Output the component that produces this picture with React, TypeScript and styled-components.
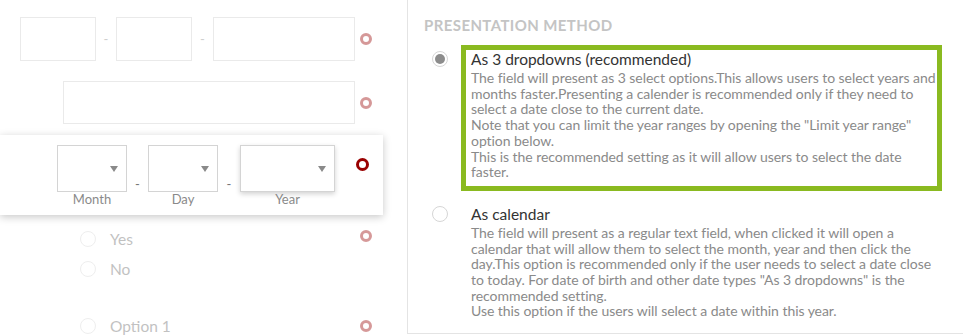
import React from "react";
import styled, { createGlobalStyle } from "styled-components";

const GlobalStyle = createGlobalStyle`
  html, body {
    margin: 0;
    padding: 0;
    background: #ffffff;
    font-family: Lato, "Open Sans", sans-serif;
  }
`;

const Page = styled.div`
  display: flex;
  width: 963px;
  height: 336px;
  overflow: hidden;
  background: #fff;
`;

const LeftPane = styled.div`
  width: 407px;
  flex-shrink: 0;
  display: flex;
  flex-direction: column;
  padding-top: 17px;
  box-sizing: border-box;
`;

const Faded = styled.div<{ $top?: number }>`
  opacity: 0.4;
  margin-top: ${(p) => p.$top ?? 0}px;
`;

const FieldRow = styled.div<{ $indent: number }>`
  display: flex;
  align-items: center;
  padding-left: ${(p) => p.$indent}px;
`;

const TextBox = styled.div<{ $w: number }>`
  width: ${(p) => p.$w}px;
  height: 44px;
  box-sizing: border-box;
  border: 1px solid #cccccc;
  background: #fff;
`;

const Dash = styled.span<{ $w: number }>`
  width: ${(p) => p.$w}px;
  text-align: center;
  color: #888;
  font-size: 13px;
`;

const Required = styled.span<{ $size?: number }>`
  display: inline-block;
  width: ${(p) => p.$size ?? 12}px;
  height: ${(p) => p.$size ?? 12}px;
  box-sizing: border-box;
  border: 3px solid #990000;
  border-radius: 50%;
  flex-shrink: 0;
`;

const Card = styled.div`
  margin-top: 11px;
  width: 383px;
  height: 82px;
  box-sizing: border-box;
  background: #fff;
  box-shadow: 0 2px 8px rgba(0, 0, 0, 0.22);
  display: flex;
  align-items: flex-start;
  padding: 10px 0 0 57px;
`;

const SelectGroup = styled.div`
  display: flex;
  flex-direction: column;
  align-items: center;
`;

const SelectBox = styled.div<{ $w: number; $focus?: boolean }>`
  width: ${(p) => p.$w}px;
  height: 47px;
  box-sizing: border-box;
  border: 1px solid #d4d4d4;
  background: #fff;
  display: flex;
  align-items: center;
  justify-content: flex-end;
  padding-right: 8px;
  box-shadow: ${(p) => (p.$focus ? "0 2px 5px rgba(0,0,0,0.18)" : "none")};
`;

const Caret = styled.span`
  width: 0;
  height: 0;
  border-left: 4px solid transparent;
  border-right: 4px solid transparent;
  border-top: 6px solid #8a8a8a;
`;

const SelectLabel = styled.span`
  font-size: 13px;
  color: #8a8a8a;
  line-height: 15px;
`;

const SelectDash = styled.span<{ $w: number }>`
  width: ${(p) => p.$w}px;
  text-align: center;
  color: #777;
  font-size: 13px;
  margin-top: 31px;
`;

const ChoiceRow = styled.div<{ $top: number }>`
  display: flex;
  align-items: center;
  margin-top: ${(p) => p.$top}px;
  padding-left: 80px;
  height: 20px;
`;

const Radio = styled.span<{ $checked?: boolean }>`
  width: 16px;
  height: 16px;
  box-sizing: border-box;
  border-radius: 50%;
  border: 1px solid #d6d6d6;
  background: #fff;
  flex-shrink: 0;
  display: flex;
  align-items: center;
  justify-content: center;
  &::after {
    content: "";
    display: ${(p) => (p.$checked ? "block" : "none")};
    width: 10px;
    height: 10px;
    border-radius: 50%;
    background: #8c8c8c;
  }
`;

const ChoiceText = styled.span`
  margin-left: 14px;
  font-size: 15.5px;
  color: #666;
  width: 240px;
`;

const RightPane = styled.div`
  flex: 1;
  height: 334px;
  box-sizing: border-box;
  border-left: 1px solid #e4e4e4;
  border-bottom: 1px solid #e4e4e4;
  padding: 16px 0 0 16px;
`;

const SectionTitle = styled.div`
  font-size: 15px;
  font-weight: 700;
  color: #c4c4c4;
  line-height: 18px;
  letter-spacing: 0.4px;
`;

const Options = styled.div`
  display: flex;
  flex-direction: column;
  gap: 9px;
  margin-top: 11px;
`;

const Option = styled.div`
  display: flex;
  align-items: flex-start;
  padding-left: 8px;
`;

const RadioSlot = styled.div`
  padding-top: 6px;
  width: 29px;
  flex-shrink: 0;
`;

const OptionBody = styled.div<{ $active?: boolean }>`
  width: 481px;
  box-sizing: border-box;
  border: 5px solid ${(p) => (p.$active ? "#8aba20" : "transparent")};
  padding: 0 0 6px 5px;
`;

const OptionTitle = styled.div`
  font-size: 15.5px;
  color: #333;
  line-height: 18px;
  margin-bottom: 2px;
`;

const OptionDesc = styled.div`
  font-size: 14px;
  color: #8a8a8a;
  line-height: 15.7px;
  letter-spacing: -0.05px;
  margin-right: -4px;
`;

export default function App() {
  return (
    <>
      <GlobalStyle />
      <Page>
        <LeftPane>
          <Faded>
            <FieldRow $indent={20}>
              <TextBox $w={76} />
              <Dash $w={20}>-</Dash>
              <TextBox $w={76} />
              <Dash $w={21}>-</Dash>
              <TextBox $w={142} />
              <Required style={{ marginLeft: 5 }} />
            </FieldRow>
          </Faded>
          <Faded $top={20}>
            <FieldRow $indent={63}>
              <TextBox $w={292} style={{ height: 43 }} />
              <Required style={{ marginLeft: 5 }} />
            </FieldRow>
          </Faded>

          <Card>
            <SelectGroup>
              <SelectBox $w={70}>
                <Caret />
              </SelectBox>
              <SelectLabel>Month</SelectLabel>
            </SelectGroup>
            <SelectDash $w={21}>-</SelectDash>
            <SelectGroup>
              <SelectBox $w={70}>
                <Caret />
              </SelectBox>
              <SelectLabel>Day</SelectLabel>
            </SelectGroup>
            <SelectDash $w={22}>-</SelectDash>
            <SelectGroup>
              <SelectBox $w={95} $focus>
                <Caret />
              </SelectBox>
              <SelectLabel>Year</SelectLabel>
            </SelectGroup>
            <Required $size={13} style={{ marginLeft: 21, marginTop: 13 }} />
          </Card>

          <Faded>
            <ChoiceRow $top={14}>
              <Radio />
              <ChoiceText>Yes</ChoiceText>
              <Required style={{ marginLeft: 10, marginTop: -6 }} />
            </ChoiceRow>
            <ChoiceRow $top={10}>
              <Radio />
              <ChoiceText>No</ChoiceText>
            </ChoiceRow>
            <ChoiceRow $top={37}>
              <Radio />
              <ChoiceText>Option 1</ChoiceText>
              <Required style={{ marginLeft: 10, marginTop: 0 }} />
            </ChoiceRow>
          </Faded>
        </LeftPane>

        <RightPane>
          <SectionTitle>PRESENTATION METHOD</SectionTitle>
          <Options>
            <Option>
              <RadioSlot>
                <Radio $checked />
              </RadioSlot>
              <OptionBody $active>
                <OptionTitle>As 3 dropdowns (recommended)</OptionTitle>
                <OptionDesc>
                  The field will present as 3 select options.This allows users to select years and
                  months faster.Presenting a calender is recommended only if they need to select a
                  date close to the current date.
                  <br />
                  Note that you can limit the year ranges by opening the "Limit year range" option
                  below.
                  <br />
                  This is the recommended setting as it will allow users to select the date faster.
                </OptionDesc>
              </OptionBody>
            </Option>
            <Option>
              <RadioSlot>
                <Radio />
              </RadioSlot>
              <OptionBody>
                <OptionTitle>As calendar</OptionTitle>
                <OptionDesc>
                  The field will present as a regular text field, when clicked it will open a
                  calendar that will allow them to select the month, year and then click the
                  day.This option is recommended only if the user needs to select a date close to
                  today. For date of birth and other date types "As 3 dropdowns" is the recommended
                  setting.
                  <br />
                  Use this option if the users will select a date within this year.
                </OptionDesc>
              </OptionBody>
            </Option>
          </Options>
        </RightPane>
      </Page>
    </>
  );
}
